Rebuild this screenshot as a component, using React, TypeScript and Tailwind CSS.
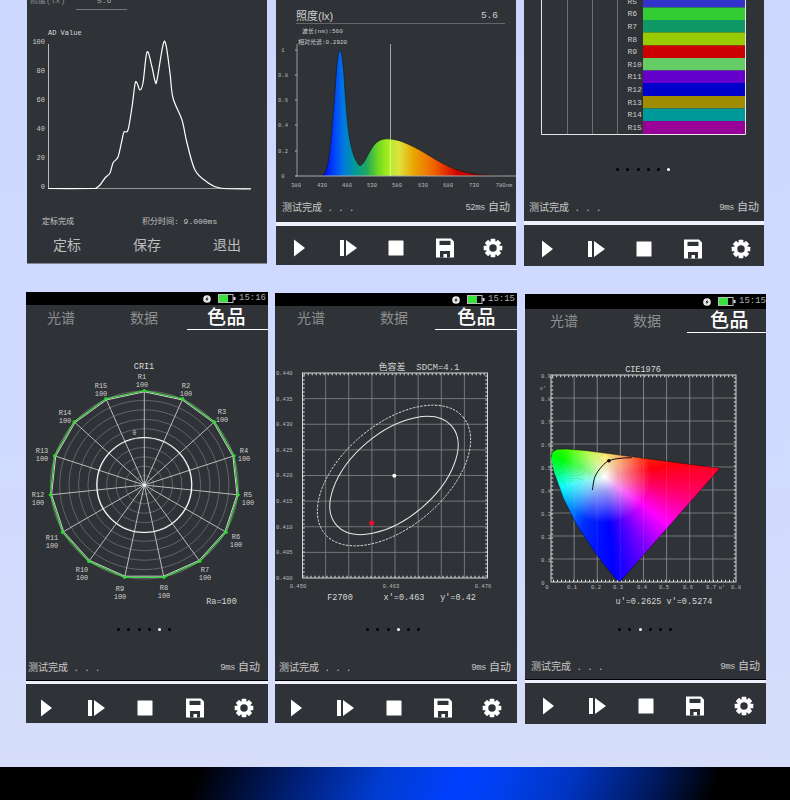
import React from "react";

type P = [number, number];

function smooth(pts: P[]): string {
  let d = `M${pts[0][0]} ${pts[0][1]}`;
  for (let i = 0; i < pts.length - 1; i++) {
    const p0 = pts[Math.max(0, i - 1)];
    const p1 = pts[i];
    const p2 = pts[i + 1];
    const p3 = pts[Math.min(pts.length - 1, i + 2)];
    const c1: P = [p1[0] + (p2[0] - p0[0]) / 6, p1[1] + (p2[1] - p0[1]) / 6];
    const c2: P = [p2[0] - (p3[0] - p1[0]) / 6, p2[1] - (p3[1] - p1[1]) / 6];
    d += `C${c1[0].toFixed(1)} ${c1[1].toFixed(1)} ${c2[0].toFixed(1)} ${c2[1].toFixed(1)} ${p2[0]} ${p2[1]}`;
  }
  return d;
}

const range = (n: number) => Array.from({ length: n }, (_, i) => i);

function Gear() {
  return (
    <svg viewBox="0 0 22 22" className="w-5 h-5">
      {range(8).map((i) => (
        <rect key={i} x="8.4" y="0.8" width="5.2" height="5" rx="0.8" fill="#fff" transform={`rotate(${i * 45} 11 11)`} />
      ))}
      <circle cx="11" cy="11" r="5.9" fill="none" stroke="#fff" strokeWidth="3.6" />
    </svg>
  );
}

function Toolbar({ className }: { className: string }) {
  return (
    <div className={`shrink-0 flex items-center justify-between bg-[#2f3236] ${className}`}>
      <svg viewBox="0 0 20 20" className="w-5 h-5"><path d="M5 1.5 L16 10 L5 18.5 Z" fill="#fff" /></svg>
      <svg viewBox="0 0 20 20" className="w-5 h-5"><path d="M2 2h4v16H2z M8 2 L19 10 L8 18 Z" fill="#fff" /></svg>
      <svg viewBox="0 0 20 20" className="w-5 h-5"><rect x="2.5" y="2.5" width="15" height="15" rx="0.5" fill="#fff" /></svg>
      <svg viewBox="0 0 20 20" className="w-5 h-5">
        <path d="M1 0.5h15l3 3v16H1z" fill="#fff" />
        <rect x="4.5" y="2.8" width="11" height="4.2" fill="#2f3236" />
        <rect x="5" y="13" width="10" height="6.5" fill="#2f3236" />
        <rect x="8.5" y="16" width="3.5" height="3.5" fill="#fff" />
      </svg>
      <Gear />
    </div>
  );
}

function Footer({ right, className }: { right: string; className: string }) {
  return (
    <div className={`flex items-center justify-between text-[#c8c8c8] ${className}`}>
      <span className="text-[10px] leading-none">测试完成<span className="text-[9px]"> . . .</span></span>
      <span className="text-[11px] leading-none flex items-center gap-[3px]">
        <span className="text-[9px] tracking-[-0.5px]">{right}</span>自动
      </span>
    </div>
  );
}

function Separator({ className }: { className: string }) {
  return <div className={`shrink-0 bg-[#eef1fb] ${className}`} />;
}

function Dots({ white, className }: { white: number; className: string }) {
  return (
    <div className={`flex gap-[7.3px] ${className}`}>
      {range(6).map((i) => (
        <span key={i} className={i === white ? "w-[3px] h-[3px] rounded-full bg-white" : "w-[3px] h-[3px] rounded-full bg-black"} />
      ))}
    </div>
  );
}

function StatusBar({ time, className }: { time: string; className: string }) {
  return (
    <div className={`bg-black flex items-center justify-end gap-[3px] text-[#a9adb2] text-[9px] ${className}`}>
      <svg viewBox="0 0 10 10" className="w-[8px] h-[8px] mr-[4px]">
        <circle cx="5" cy="5" r="4.8" fill="#e8e8e8" />
        <path d="M6 1.5 L3 5.5 H5 L4 8.5 L7 4.5 H5 Z" fill="#000" />
      </svg>
      <svg viewBox="0 0 18 9" className="w-[18px] h-[9px]">
        <rect x="0.5" y="0.5" width="14.5" height="8" fill="none" stroke="#bbb" />
        <rect x="1" y="1" width="9" height="7" fill="#39e23c" />
        <rect x="15.5" y="3" width="2" height="3" fill="#ddd" />
      </svg>
      <span>{time}</span>
    </div>
  );
}

function Tabs({ height, padLeft, underline }: { height: string; padLeft: string; underline: string }) {
  return (
    <div className={`relative flex items-center ${height} ${padLeft}`}>
      <span className="text-[14px] leading-none text-[#8d8f91] mr-[55px] pt-[2px]">光谱</span>
      <span className="text-[14px] leading-none text-[#8d8f91] mr-[49px] pt-[2px]">数据</span>
      <span className="text-[19px] leading-none text-white tracking-[0.5px] font-medium pt-[3px]">色品</span>
      <div className={`absolute right-0 bottom-0 h-[1.5px] bg-white ${underline}`} />
    </div>
  );
}

/* ---------- Charts, all drawn in page coordinates ---------- */

const adCurve: P[] = [
  [48, 188.5], [92, 188.5], [96, 188], [100, 185], [105, 178], [110, 173], [113, 163], [118, 157], [122, 140], [124, 132], [128, 130], [132, 107], [135, 84], [137, 83], [140, 90], [143, 83], [147, 52], [152, 67], [155, 81], [157, 80], [163, 45], [166, 45], [170, 73], [173, 98], [182, 120], [187, 143], [195, 170], [207, 182], [220, 188], [251, 189],
];

function AdChart() {
  const labels: [string, number][] = [["100", 44], ["80", 73], ["60", 102], ["40", 131], ["20", 160], ["0", 189]];
  return (
    <svg viewBox="27 0 240 210" className="w-[240px] h-[210px] block font-['Liberation_Mono','Noto_Sans_CJK_SC',monospace]">
      <text x="30" y="3" fontSize="8" fill="#8d8f91">照度(lx)</text>
      <text x="97" y="3" fontSize="8" fill="#aaa">5.6</text>
      <line x1="76" y1="9.5" x2="127" y2="9.5" stroke="#777" />
      <text x="48" y="35" fontSize="7" fill="#ddd">AD Value</text>
      {labels.map(([t, y]) => (
        <text key={t} x="45" y={y} fontSize="7" fill="#ccc" textAnchor="end">{t}</text>
      ))}
      <line x1="48.5" y1="44" x2="48.5" y2="189" stroke="#bbb" />
      <line x1="48" y1="188.5" x2="251" y2="188.5" stroke="#999" />
      <path d={smooth(adCurve)} fill="none" stroke="#fff" strokeWidth="1.2" />
    </svg>
  );
}

function SpectrumChart() {
  const outline: P[] = [
    [322, 176], [326, 170], [330, 150], [334, 105], [337, 65], [340, 50], [343, 65], [346, 105], [349, 135], [353, 153], [357, 162], [360, 165.5], [364, 162], [369, 153], [375, 144], [382, 139.5], [390, 139], [400, 141], [412, 146], [425, 153], [440, 162], [455, 169], [470, 173], [490, 175.5], [516, 176],
  ];
  const ticksY: [string, number][] = [["1", 50], ["0.8", 75], ["0.6", 100], ["0.4", 125], ["0.2", 151], ["0", 176]];
  const ticksX: [string, number][] = [["380", 296], ["430", 322], ["480", 347], ["530", 372], ["580", 397], ["630", 423], ["680", 448], ["730", 474], ["780nm", 504]];
  return (
    <svg viewBox="276 24 240 168" className="w-[240px] h-[168px] block font-['Liberation_Mono','Noto_Sans_CJK_SC',monospace]">
      <defs>
        <linearGradient id="spec" gradientUnits="userSpaceOnUse" x1="322" y1="0" x2="516" y2="0">
          <stop offset="0" stopColor="#0000e8" />
          <stop offset="0.06" stopColor="#0040ff" />
          <stop offset="0.11" stopColor="#0078e0" />
          <stop offset="0.17" stopColor="#009a9a" />
          <stop offset="0.23" stopColor="#20a860" />
          <stop offset="0.29" stopColor="#70d820" />
          <stop offset="0.35" stopColor="#b0f020" />
          <stop offset="0.4" stopColor="#e0e040" />
          <stop offset="0.47" stopColor="#e8a800" />
          <stop offset="0.58" stopColor="#f06000" />
          <stop offset="0.7" stopColor="#d00000" />
          <stop offset="0.85" stopColor="#800000" />
          <stop offset="1" stopColor="#400000" />
        </linearGradient>
      </defs>
      <text x="302" y="33" fontSize="6" fill="#ccc">波长(nm):560</text>
      <text x="298" y="44" fontSize="6" fill="#ccc">相对光谱:0.2920</text>
      {ticksY.map(([t, y]) => (
        <g key={t}>
          <text x="283" y={y + 2} fontSize="5.5" fill="#bbb" textAnchor="middle">{t}</text>
          <line x1="295" y1={y} x2="297" y2={y} stroke="#bbb" />
        </g>
      ))}
      <line x1="297" y1="44" x2="297" y2="176" stroke="#999" />
      <path d={smooth(outline) + "Z"} fill="url(#spec)" />
      <path d={smooth(outline)} fill="none" stroke="#14161a" strokeWidth="0.6" />
      <line x1="296" y1="176" x2="516" y2="176" stroke="#aaa" />
      <line x1="390.5" y1="44" x2="390.5" y2="176" stroke="#fff" strokeOpacity="0.55" />
      {ticksX.map(([t, x]) => (
        <text key={t} x={x} y="187" fontSize="5.5" fill="#bbb" textAnchor="middle">{t}</text>
      ))}
    </svg>
  );
}

function BarsChart() {
  const rows: [string, string, number, number][] = [
    ["R5", "#3333cc", -5, 12.5],
    ["R6", "#33cc33", 7.5, 12.5],
    ["R7", "#0f9966", 20, 12.5],
    ["R8", "#99cc00", 32.5, 13],
    ["R9", "#cc0000", 45.5, 12.5],
    ["R10", "#66cc66", 58, 12.5],
    ["R11", "#6600cc", 70.5, 12.5],
    ["R12", "#0000cc", 83, 13],
    ["R13", "#a08c00", 96, 12.5],
    ["R14", "#009999", 108.5, 12.5],
    ["R15", "#990099", 121, 13],
  ];
  return (
    <svg viewBox="524 0 240 140" className="w-[240px] h-[140px] block font-['Liberation_Mono',monospace]">
      {[567, 592, 617].map((x) => (
        <line key={x} x1={x + 0.5} y1="0" x2={x + 0.5} y2="134" stroke="#6d6f72" />
      ))}
      {rows.map(([n, c, y, h]) => (
        <g key={n}>
          <rect x="643" y={y} width="102" height={h} fill={c} />
          <text x="627.5" y={y + h / 2 + 2.5} fontSize="8" fill="#ccc">{n}</text>
        </g>
      ))}
      <path d="M541.5 0V134.5H745.5V0" fill="none" stroke="#e4e4e4" strokeWidth="1" />
    </svg>
  );
}

function PolarChart() {
  const cx = 144.3;
  const cy = 485;
  const pt = (i: number, r: number): P => {
    const a = ((i * 24 - 90) * Math.PI) / 180;
    return [cx + r * Math.cos(a), cy + r * Math.sin(a)];
  };
  const poly = (r: number) => range(15).map((i) => pt(i, r).map((v) => v.toFixed(1)).join(",")).join(" ");
  const labels: P[] = [
    [142, 380], [186, 389], [222, 415], [244, 454], [248, 498], [236, 540], [205, 573], [164, 591], [120, 592], [82, 573], [52, 541], [38, 498], [42, 454], [65, 416], [101, 389],
  ];
  return (
    <svg viewBox="26 330 242 280" className="w-[242px] h-[280px] block font-['Liberation_Mono',monospace]">
      <text x="144" y="369" fontSize="8.5" fill="#d8d8d8" textAnchor="middle">CRI1</text>
      {range(10).map((k) => (
        <circle key={k} cx={cx} cy={cy} r={9.4 * (k + 1)} fill="none" stroke="#6e7073" strokeWidth="0.8" />
      ))}
      {range(15).map((i) => {
        const [x, y] = pt(i, 94);
        return <line key={i} x1={cx} y1={cy} x2={x} y2={y} stroke="#c8c8c8" strokeWidth="0.9" />;
      })}
      <circle cx={cx} cy={cy} r="47.5" fill="none" stroke="#fff" strokeWidth="1.2" />
      <circle cx={cx} cy={cy} r="1.5" fill="#fff" />
      <text x="134.5" y="435" fontSize="6.5" fill="#ccc" textAnchor="middle">0</text>
      <polygon points={poly(93.2)} fill="none" stroke="#fff" strokeWidth="0.8" />
      <polygon points={poly(94.4)} fill="none" stroke="#45d045" strokeWidth="1.3" />
      {range(15).map((i) => {
        const [x, y] = pt(i, 94.4);
        return <circle key={i} cx={x} cy={y} r="1.7" fill="#2fd62f" />;
      })}
      {labels.map(([x, y], i) => (
        <g key={i} fontSize="7" fill="#cfcfcf" textAnchor="middle">
          <text x={x} y={y - 1}>{`R${i + 1}`}</text>
          <text x={x} y={y + 7}>100</text>
        </g>
      ))}
      <text x="221.5" y="604" fontSize="8.5" fill="#d8d8d8" textAnchor="middle">Ra=100</text>
    </svg>
  );
}

function Frame({ x, y, w, h, nx, ny }: { x: number; y: number; w: number; h: number; nx: number; ny: number }) {
  return (
    <g>
      {range(nx - 1).map((i) => {
        const px = x + (w * (i + 1)) / nx;
        return <line key={i} x1={px} y1={y} x2={px} y2={y + h} stroke="#85878a" strokeWidth="0.8" />;
      })}
      {range(ny - 1).map((i) => {
        const py = y + (h * (i + 1)) / ny;
        return <line key={i} x1={x} y1={py} x2={x + w} y2={py} stroke="#85878a" strokeWidth="0.8" />;
      })}
      <rect x={x} y={y} width={w} height={h} fill="none" stroke="#e6e6e6" strokeWidth="0.9" />
      <rect x={x + 1.2} y={y + 1.2} width={w - 2.4} height={h - 2.4} fill="none" stroke="#e6e6e6" strokeWidth="2" strokeDasharray="1 3" />
    </g>
  );
}

function EllipseChart() {
  const ys = ["0.440", "0.435", "0.430", "0.425", "0.420", "0.415", "0.410", "0.405", "0.400"];
  return (
    <svg viewBox="275 330 242 280" className="w-[242px] h-[280px] block font-['Liberation_Mono','Noto_Sans_CJK_SC',monospace]">
      <text x="419" y="370" fontSize="9" fill="#d0d0d0" textAnchor="middle" xmlSpace="preserve">色容差  SDCM=4.1</text>
      <Frame x={302.5} y={373} w={185} h={205} nx={8} ny={8} />
      {ys.map((t, i) => (
        <text key={t} x="276" y={375 + i * 25.6} fontSize="5.5" fill="#bbb">{t}</text>
      ))}
      <ellipse cx="394" cy="475.5" rx="90.5" ry="51.3" transform="rotate(-40.2 394 475.5)" fill="none" stroke="#e0e0e0" strokeWidth="0.9" strokeDasharray="2.5 1.2" />
      <ellipse cx="394" cy="475.5" rx="76" ry="42.6" transform="rotate(-40.5 394 475.5)" fill="none" stroke="#e8e8e8" strokeWidth="1" />
      <circle cx="394.3" cy="475.7" r="2" fill="#fff" />
      <circle cx="371.7" cy="523" r="2.6" fill="#e01030" />
      <text x="298" y="588" fontSize="5.5" fill="#bbb" textAnchor="middle">0.450</text>
      <text x="391" y="588" fontSize="5.5" fill="#bbb" textAnchor="middle">0.463</text>
      <text x="483" y="588" fontSize="5.5" fill="#bbb" textAnchor="middle">0.476</text>
      <text x="340" y="600" fontSize="8.5" fill="#d8d8d8" textAnchor="middle">F2700</text>
      <text x="404" y="600" fontSize="8.5" fill="#d8d8d8" textAnchor="middle">x'=0.463</text>
      <text x="458" y="600" fontSize="8.5" fill="#d8d8d8" textAnchor="middle">y'=0.42</text>
    </svg>
  );
}

function lerpHue(angle: number): string {
  const stops: [number, number[]][] = [
    [0, [255, 224, 0]], [8, [255, 210, 0]], [45, [255, 96, 0]], [80, [255, 0, 16]], [100, [255, 0, 96]], [127, [255, 0, 255]], [150, [128, 0, 255]], [175, [0, 0, 255]], [205, [0, 48, 255]], [225, [0, 128, 255]], [258, [0, 255, 255]], [293, [0, 255, 0]], [326, [160, 255, 0]], [360, [255, 224, 0]],
  ];
  for (let i = 0; i < stops.length - 1; i++) {
    const [a, ca] = stops[i];
    const [b, cb] = stops[i + 1];
    if (angle >= a && angle <= b) {
      const t = (angle - a) / (b - a);
      return `rgb(${ca.map((c, k) => Math.round(c + (cb[k] - c) * t)).join(",")})`;
    }
  }
  return "#fff";
}

function CieChart() {
  const cx = 605;
  const cy = 477;
  const toPage = (p: P): P => [520 + p[0] / 3, 285 + p[1] / 3];
  const outlineZ: P[] = [
    [93, 520], [97, 500], [112, 493], [140, 492], [200, 497], [600, 550], [300, 890], [285, 880], [230, 810], [170, 720], [130, 640], [105, 570],
  ];
  const outline = outlineZ.map(toPage).map((p) => p.map((v) => v.toFixed(1)).join(",")).join(" ");
  const wedges = range(120).map((i) => {
    const a0 = ((i * 3 - 90 - 0.3) * Math.PI) / 180;
    const a1 = (((i + 1) * 3 - 90 + 0.3) * Math.PI) / 180;
    const R = 200;
    return {
      key: i,
      d: `M${cx} ${cy}L${cx + R * Math.cos(a0)} ${cy + R * Math.sin(a0)}L${cx + R * Math.cos(a1)} ${cy + R * Math.sin(a1)}Z`,
      fill: lerpHue(i * 3 + 1.5),
    };
  });
  const curve = smooth(([[217, 615], [225, 575], [245, 545], [267, 527], [300, 520], [335, 518]] as P[]).map(toPage));
  const xl: [string, number][] = [["0", 547], ["0.1", 572], ["0.2", 596], ["0.3", 618], ["0.4", 642], ["0.5", 664], ["0.6", 688], ["0.7", 711], ["u'", 722], ["0.8", 736]];
  return (
    <svg viewBox="525 333 241 280" className="w-[241px] h-[280px] block font-['Liberation_Mono',monospace]">
      <defs>
        <clipPath id="cie"><polygon points={outline} /></clipPath>
        <radialGradient id="cieWhite" gradientUnits="userSpaceOnUse" cx={cx} cy={cy} r="46">
          <stop offset="0" stopColor="#fff" stopOpacity="1" />
          <stop offset="0.3" stopColor="#fff" stopOpacity="0.6" />
          <stop offset="1" stopColor="#fff" stopOpacity="0" />
        </radialGradient>
      </defs>
      <text x="643" y="372" fontSize="8.5" fill="#d8d8d8" textAnchor="middle">CIE1976</text>
      <Frame x={551} y={375} w={185} h={207} nx={8} ny={9} />
      <g clipPath="url(#cie)">
        {wedges.map((w) => (
          <path key={w.key} d={w.d} fill={w.fill} />
        ))}
        <circle cx={cx} cy={cy} r="46" fill="url(#cieWhite)" />
      </g>
      <g stroke="#fff" strokeWidth="0.5" strokeOpacity="0.18">
        {range(7).map((i) => (
          <line key={i} x1={551 + 23.1 * (i + 1)} y1="375" x2={551 + 23.1 * (i + 1)} y2="582" />
        ))}
      </g>
      <polyline points={outline} fill="none" stroke="#101010" strokeWidth="0.5" />
      <path d={curve} fill="none" stroke="#0c0c0c" strokeWidth="1" />
      <circle cx="609" cy="460.7" r="1.8" fill="#0c0c0c" />
      {["0.9", "0.8", "0.7", "0.6", "0.5", "0.4", "0.3", "0.2", "0.1", "0"].map((t, i) => (
        <text key={t} x={t === "0" ? 543 : 546} y={378 + i * 23} fontSize="5.5" fill="#bbb" textAnchor="middle">{t}</text>
      ))}
      <text x="543" y="390" fontSize="5.5" fill="#bbb" textAnchor="middle">v'</text>
      {xl.map(([t, x]) => (
        <text key={t} x={x} y="589" fontSize="5.5" fill="#bbb" textAnchor="middle">{t}</text>
      ))}
      <text x="664" y="604" fontSize="8.5" fill="#d8d8d8" textAnchor="middle" xmlSpace="preserve">u'=0.2625 v'=0.5274</text>
    </svg>
  );
}

export default function App() {
  return (
    <div className="w-[790px] h-[800px] overflow-hidden flex flex-col bg-[linear-gradient(180deg,#ced7ff_0%,#d1daff_60%,#d6def8_100%)] font-['Liberation_Mono','Noto_Sans_CJK_SC',monospace]">
      {/* top row: screens continue above the picture */}
      <div className="flex items-start h-[266px] shrink-0">
        <div className="ml-[27px] w-[240px] h-[264px] bg-[#2f3236] flex flex-col border-b border-[#7d8796]">
          <AdChart />
          <div className="flex text-[#c4c4c4] text-[8px] leading-none h-[24px] items-center">
            <span className="ml-[15px] w-[100px]">定标完成</span>
            <span>积分时间: 9.000ms</span>
          </div>
          <div className="flex justify-between px-[26px] pt-[5px] text-[14px] leading-none text-[#bdbdbd]">
            <span>定标</span>
            <span>保存</span>
            <span>退出</span>
          </div>
        </div>

        <div className="ml-[9px] w-[240px] flex flex-col">
          <div className="h-[222px] bg-[#2f3236] flex flex-col">
            <div className="ml-[20px] mr-[11px] h-[24px] pt-[9px] flex justify-between border-b border-[#666] text-[#cfcfcf] text-[11px] leading-[14px]">
              <span>照度<span className="font-['Liberation_Sans',sans-serif]">(lx)</span></span>
              <span className="mr-[7px] text-[9.5px]">5.6</span>
            </div>
            <SpectrumChart />
            <Footer right="52ms" className="h-[30px] px-[6px] pt-[3px]" />
          </div>
          <Separator className="h-[4px]" />
          <Toolbar className="h-[39px] pl-[13px] pr-[13px] pt-[5px]" />
        </div>

        <div className="ml-[8px] w-[240px] flex flex-col">
          <div className="h-[221px] bg-[#2f3236] flex flex-col">
            <BarsChart />
            <Dots white={5} className="mt-[28px] ml-[92px]" />
            <Footer right="9ms" className="mt-[32px] px-[5px]" />
          </div>
          <Separator className="h-[4px]" />
          <Toolbar className="h-[41px] pl-[13px] pr-[13px] pt-[6px]" />
        </div>
      </div>

      {/* bottom row */}
      <div className="flex items-start mt-[26px] h-[433px] shrink-0">
        <div className="ml-[26px] w-[242px] flex flex-col">
          <div className="h-[388px] bg-[#2f3236] flex flex-col">
            <StatusBar time="15:16" className="h-[13px] pr-[2px]" />
            <Tabs height="h-[25px]" padLeft="pl-[21px]" underline="w-[81px]" />
            <PolarChart />
            <Dots white={4} className="mt-[18px] ml-[91px]" />
            <Footer right="9ms" className="mt-[32px] pl-[2px] pr-[8px]" />
          </div>
          <div className="border-t border-black"><Separator className="h-[3px]" /></div>
          <Toolbar className="h-[39px] pl-[10px] pr-[14px] pt-[8px]" />
        </div>

        <div className="ml-[7px] mt-[1px] w-[242px] flex flex-col">
          <div className="h-[387px] bg-[#2f3236] flex flex-col">
            <StatusBar time="15:15" className="h-[13px] pr-[2px]" />
            <Tabs height="h-[24px]" padLeft="pl-[22px]" underline="w-[82px]" />
            <EllipseChart />
            <Dots white={3} className="mt-[18px] ml-[91px]" />
            <Footer right="9ms" className="mt-[32px] pl-[4px] pr-[6px]" />
          </div>
          <div className="border-t border-black"><Separator className="h-[3px]" /></div>
          <Toolbar className="h-[39px] pl-[11px] pr-[15px] pt-[8px]" />
        </div>

        <div className="ml-[8px] mt-[2px] w-[241px] flex flex-col">
          <div className="h-[385px] bg-[#2f3236] flex flex-col">
            <StatusBar time="15:15" className="h-[15px]" />
            <Tabs height="h-[24px]" padLeft="pl-[25px]" underline="w-[79px]" />
            <CieChart />
            <Dots white={2} className="mt-[15px] ml-[93px]" />
            <Footer right="9ms" className="mt-[31px] px-[6px]" />
          </div>
          <div className="border-t border-black"><Separator className="h-[3px]" /></div>
          <Toolbar className="h-[41px] pl-[13px] pr-[12px] pt-[5px]" />
        </div>
      </div>

      <div className="mt-[42px] flex-1 bg-[linear-gradient(112deg,#000_25%,#00207a_38%,#003cd0_48%,#0040ff_58%,#0040f0_63%,#0034c0_72%,#001a60_82%,#000_90%)]" />
    </div>
  );
}
